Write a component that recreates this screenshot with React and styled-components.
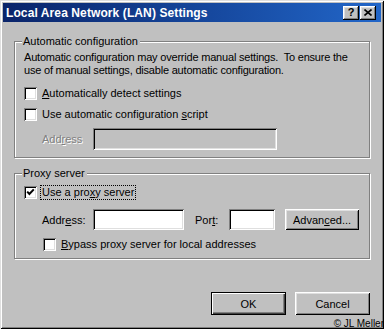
import React from 'react'
import styled, { createGlobalStyle } from 'styled-components'

const GlobalStyle = createGlobalStyle`
    html, body {
        margin: 0;
        padding: 0;
        background: #c0c0c0;
    }
    body {
        font-family: "Liberation Sans", Arial, sans-serif;
        font-size: 11px;
        color: #000;
    }
`

const face = '#c0c0c0'

const Window = styled.div`
    position: relative;
    width: 384px;
    height: 329px;
    box-sizing: border-box;
    padding: 3px;
    background: ${face};
    box-shadow: inset 1px 1px 0 #dfdfdf, inset -1px -1px 0 #000,
        inset 2px 2px 0 #fff, inset -2px -2px 0 #808080;
    display: flex;
    flex-direction: column;
`

const TitleBar = styled.div`
    height: 19px;
    display: flex;
    align-items: center;
    padding: 0 3px 0 3px;
    background: linear-gradient(90deg, #0a246a 0%, #16489e 55%, #2266c8 100%);
`

const Title = styled.div`
    flex: 1;
    color: #fff;
    font-weight: bold;
    font-size: 12px;
    letter-spacing: 0.1px;
`

const CaptionButtons = styled.div`
    display: flex;
    gap: 1px;
    margin-right: 2px;
`

const CaptionButton = styled.div`
    width: 16px;
    height: 14px;
    box-sizing: border-box;
    background: ${face};
    box-shadow: inset -1px -1px 0 #000, inset 1px 1px 0 #fff,
        inset -2px -2px 0 #808080, inset 2px 2px 0 #dfdfdf;
    display: flex;
    align-items: center;
    justify-content: center;
    font-weight: bold;
    font-size: 11px;
    line-height: 1;
    padding-bottom: 1px;
`

const Body = styled.div`
    display: flex;
    flex-direction: column;
    padding: 13px 10px 0 11px;
`

const Group = styled.fieldset`
    margin: ${p => p.$top || 0}px 0 0 0;
    padding: 0 8px 7px 9px;
    border: 1px solid #808080;
    box-shadow: 1px 1px 0 #fff, inset 1px 1px 0 #fff;
    width: 356px;
    box-sizing: border-box;
    display: flex;
    flex-direction: column;
    min-width: 0;
`

const Legend = styled.legend`
    padding: 0 2px 0 1px;
    margin-left: -2px;
    line-height: 13px;
    background: ${face};
`

const Paragraph = styled.div`
    line-height: 13px;
    margin-top: 3px;
    white-space: nowrap;
    letter-spacing: -0.2px;
`

const Row = styled.div`
    display: flex;
    align-items: center;
    margin-top: ${p => p.$top || 0}px;
    padding-left: ${p => p.$indent || 0}px;
    height: ${p => p.$h || 13}px;
    white-space: nowrap;
`

const Box = styled.span`
    width: 13px;
    height: 13px;
    box-sizing: border-box;
    flex: none;
    background: #fff;
    box-shadow: inset 1px 1px 0 #808080, inset -1px -1px 0 #fff,
        inset 2px 2px 0 #000, inset -2px -2px 0 #dfdfdf;
    display: flex;
    align-items: center;
    justify-content: center;
    margin-right: ${p => p.$gap || 5}px;
`

const CheckText = styled.span`
    line-height: 13px;
    padding: 1px 2px;
    margin-left: -2px;
    outline: ${p => (p.$focus ? '1px dotted #000' : 'none')};
    outline-offset: -1px;
`

const U = styled.span`
    text-decoration: underline;
`

const Label = styled.span`
    width: ${p => p.$w}px;
    flex: none;
    margin-left: ${p => p.$left || 0}px;
    color: ${p => (p.$disabled ? '#808080' : '#000')};
    text-shadow: ${p => (p.$disabled ? '1px 1px 0 #fff' : 'none')};
`

const Field = styled.div`
    width: ${p => p.$w}px;
    height: ${p => p.$h || 21}px;
    box-sizing: border-box;
    flex: none;
    background: ${p => (p.$disabled ? face : '#fff')};
    box-shadow: inset 1px 1px 0 #808080, inset -1px -1px 0 #fff,
        inset 2px 2px 0 #000, inset -2px -2px 0 #dfdfdf;
`

const Button = styled.div`
    width: ${p => p.$w || 75}px;
    height: ${p => p.$h || 23}px;
    box-sizing: border-box;
    flex: none;
    display: flex;
    align-items: center;
    justify-content: center;
    background: ${face};
    margin-left: ${p => p.$left || 0}px;
    border: ${p => (p.$default ? '1px solid #000' : 'none')};
    box-shadow: ${p =>
        p.$default
            ? 'inset 1px 1px 0 #fff, inset -1px -1px 0 #404040, inset -2px -2px 0 #808080'
            : 'inset 1px 1px 0 #fff, inset -1px -1px 0 #000, inset 2px 2px 0 #dfdfdf, inset -2px -2px 0 #808080'};
`

const Footer = styled.div`
    display: flex;
    justify-content: flex-end;
    margin-top: 33px;
    padding-right: 1px;
`

const Watermark = styled.div`
    position: absolute;
    right: 0;
    bottom: 0;
    font-size: 10px;
    line-height: 11px;
    color: #000;
`

function CheckBox({ checked, gap, children, focus }) {
    return (
        <>
            <Box $gap={gap}>
                {checked && (
                    <svg width="9" height="9" viewBox="0 0 9 9">
                        <path d="M1.2 3.6 L3.4 6 L7.8 1.4" fill="none" stroke="#000" strokeWidth="2" />
                    </svg>
                )}
            </Box>
            <CheckText $focus={focus}>{children}</CheckText>
        </>
    )
}

export default function App() {
    return (
        <Window>
            <GlobalStyle />
            <TitleBar>
                <Title>Local Area Network (LAN) Settings</Title>
                <CaptionButtons>
                    <CaptionButton>?</CaptionButton>
                    <CaptionButton>
                        <svg width="8" height="7" viewBox="0 0 8 7">
                            <path d="M0.5 0.5 L7.5 6.5 M7.5 0.5 L0.5 6.5" stroke="#000" strokeWidth="1.6" />
                        </svg>
                    </CaptionButton>
                </CaptionButtons>
            </TitleBar>

            <Body>
                <Group>
                    <Legend>Automatic configuration</Legend>
                    <Paragraph>
                        Automatic configuration may override manual settings.&nbsp; To ensure the
                        <br />
                        use of manual settings, disable automatic configuration.
                    </Paragraph>
                    <Row $top={10}>
                        <CheckBox>
                            <U>A</U>utomatically detect settings
                        </CheckBox>
                    </Row>
                    <Row $top={8}>
                        <CheckBox>
                            Use automatic configuration <U>s</U>cript
                        </CheckBox>
                    </Row>
                    <Row $top={7} $indent={18} $h={22}>
                        <Label $w={51} $disabled>
                            Add<U>r</U>ess
                        </Label>
                        <Field $w={184} $h={22} $disabled />
                    </Row>
                </Group>

                <Group $top={9}>
                    <Legend>Proxy server</Legend>
                    <Row $top={6}>
                        <CheckBox checked focus>
                            Use a pro<U>x</U>y server
                        </CheckBox>
                    </Row>
                    <Row $top={10} $indent={18} $h={21}>
                        <Label $w={51}>
                            Addr<U>e</U>ss:
                        </Label>
                        <Field $w={91} />
                        <Label $w={34} $left={11}>
                            Por<U>t</U>:
                        </Label>
                        <Field $w={46} />
                        <Button $w={74} $h={21} $left={10}>
                            Advan<U>c</U>ed...
                        </Button>
                    </Row>
                    <Row $top={8} $indent={19}>
                        <CheckBox>
                            <U>B</U>ypass proxy server for local addresses
                        </CheckBox>
                    </Row>
                </Group>

                <Footer>
                    <Button $default>OK</Button>
                    <Button $left={9}>Cancel</Button>
                </Footer>
            </Body>

            <Watermark>© JL Meller</Watermark>
        </Window>
    )
}
